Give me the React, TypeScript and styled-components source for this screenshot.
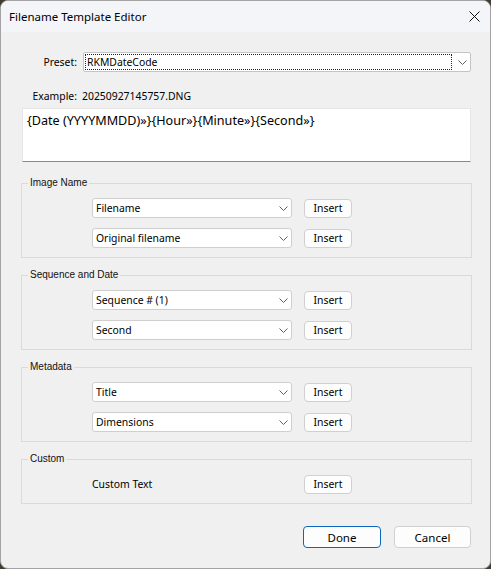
import React from 'react';
import styled, { createGlobalStyle } from 'styled-components';

const GlobalStyle = createGlobalStyle`
  html, body {
    margin: 0;
    padding: 0;
    background: #3f3c33;
  }
  body {
    font-family: "Noto Sans", "Open Sans", sans-serif;
    color: #000;
  }
`;

const Window = styled.div`
  width: 491px;
  height: 569px;
  box-sizing: border-box;
  background: #f0f0f0;
  border: 1px solid #a3a3a3;
  border-radius: 8px;
  overflow: hidden;
  display: flex;
  flex-direction: column;
`;

const TitleBar = styled.div`
  height: 31px;
  flex: none;
  display: flex;
  align-items: center;
  justify-content: space-between;
  padding: 0 10px 0 8px;
  background: #f3f5f9;
  font-size: 11.5px;
`;

const CloseButton = styled.div`
  width: 12px;
  height: 12px;
  display: flex;
  align-items: center;
  justify-content: center;
`;

const Body = styled.div`
  padding: 20px 18px 0 20px;
  display: flex;
  flex-direction: column;
  font-size: 10.4px;
`;

const FieldRow = styled.div<{ $top?: number }>`
  display: grid;
  grid-template-columns: 56px 1fr;
  column-gap: 6px;
  align-items: center;
  margin-top: ${(p) => p.$top ?? 0}px;
`;

const FieldLabel = styled.div`
  text-align: right;
  line-height: 16px;
`;

const ExampleValue = styled.div`
  line-height: 16px;
  margin-left: -1px;
`;

const Combo = styled.div<{ $width?: string }>`
  box-sizing: border-box;
  width: ${(p) => p.$width ?? '200px'};
  height: 20px;
  background: #fff;
  border: 1px solid #cfcfcf;
  border-radius: 3px;
  display: flex;
  align-items: center;
  justify-content: space-between;
  padding: 0 3px 0 3px;
`;

const PresetCombo = styled(Combo)`
  border-radius: 2px;
  border-color: #c4c4c4;
  padding: 0 3px 0 1px;
  margin-right: 1px;
`;

const FocusText = styled.span`
  flex: 1;
  height: 16px;
  box-sizing: border-box;
  border: 1px dotted #222;
  display: flex;
  align-items: center;
  padding-left: 1px;
  margin-right: 6px;
`;

const Template = styled.div`
  box-sizing: border-box;
  height: 54px;
  margin: 4px 1px 0 1px;
  background: #fff;
  border: 1px solid #e6e6e6;
  border-bottom-color: #8a8a8a;
  padding: 4px 4px;
  font-size: 12.6px;
  line-height: 16px;
`;

const Group = styled.fieldset<{ $top?: number }>`
  margin: ${(p) => p.$top ?? 11}px 0 0 0;
  padding: 0;
  border: 1px solid #dadada;
  min-width: 0;
`;

const Legend = styled.legend`
  margin-left: 6px;
  padding: 0 2px;
  font-family: "Liberation Sans", Arial, sans-serif;
  font-size: 10px;
  line-height: 12px;
  color: #111;
`;

const GroupGrid = styled.div`
  display: grid;
  grid-template-columns: 200px 48px;
  column-gap: 12px;
  row-gap: 10px;
  align-items: center;
  padding: 9px 0 9px 70px;
`;

const RowLabel = styled.div`
  height: 20px;
  line-height: 20px;
`;

const Button = styled.button<{ $primary?: boolean }>`
  box-sizing: border-box;
  font-family: "Noto Sans", "Open Sans", sans-serif;
  color: #000;
  background: #fdfdfd;
  border: 1px solid ${(p) => (p.$primary ? '#0b67bd' : '#d0d0d0')};
  border-radius: 4px;
  padding: 0;
  cursor: default;
`;

const InsertButton = styled(Button)`
  width: 48px;
  height: 19px;
  font-size: 10.4px;
`;

const Footer = styled.div`
  display: flex;
  justify-content: flex-end;
  gap: 13px;
  margin-top: 22px;
  padding-right: 1px;
`;

const DialogButton = styled(Button)<{ $w: number }>`
  width: ${(p) => p.$w}px;
  height: 22px;
  font-size: 11.5px;
`;

const Chevron = () => (
  <svg width="9" height="5" viewBox="0 0 9 5">
    <path d="M0.5 0.5 L4.5 4.5 L8.5 0.5" fill="none" stroke="#5f5f5f" strokeWidth="1" />
  </svg>
);

type Row = { value?: string; label?: string };

const groups: { title: string; rows: Row[] }[] = [
  { title: 'Image Name', rows: [{ value: 'Filename' }, { value: 'Original filename' }] },
  { title: 'Sequence and Date', rows: [{ value: 'Sequence # (1)' }, { value: 'Second' }] },
  { title: 'Metadata', rows: [{ value: 'Title' }, { value: 'Dimensions' }] },
  { title: 'Custom', rows: [{ label: 'Custom Text' }] },
];

const App: React.FC = () => {
  return (
    <>
      <GlobalStyle />
      <Window>
        <TitleBar>
          <span>Filename Template Editor</span>
          <CloseButton>
            <svg width="11" height="11" viewBox="0 0 11 11">
              <path d="M0.5 0.5 L10.5 10.5 M10.5 0.5 L0.5 10.5" stroke="#111" strokeWidth="1" />
            </svg>
          </CloseButton>
        </TitleBar>
        <Body>
          <FieldRow>
            <FieldLabel>Preset:</FieldLabel>
            <PresetCombo $width="auto">
              <FocusText>RKMDateCode</FocusText>
              <Chevron />
            </PresetCombo>
          </FieldRow>
          <FieldRow $top={16}>
            <FieldLabel>Example:</FieldLabel>
            <ExampleValue>20250927145757.DNG</ExampleValue>
          </FieldRow>
          <Template>{'{Date (YYYYMMDD)»}{Hour»}{Minute»}{Second»}'}</Template>

          {groups.map((g, i) => (
            <Group key={g.title} $top={i === 0 ? 15 : 11}>
              <Legend>{g.title}</Legend>
              <GroupGrid>
                {g.rows.map((r, j) => (
                  <React.Fragment key={j}>
                    {r.value ? (
                      <Combo>
                        <span>{r.value}</span>
                        <Chevron />
                      </Combo>
                    ) : (
                      <RowLabel>{r.label}</RowLabel>
                    )}
                    <InsertButton>Insert</InsertButton>
                  </React.Fragment>
                ))}
              </GroupGrid>
            </Group>
          ))}

          <Footer>
            <DialogButton $primary $w={78}>Done</DialogButton>
            <DialogButton $w={77}>Cancel</DialogButton>
          </Footer>
        </Body>
      </Window>
    </>
  );
};

export default App;
